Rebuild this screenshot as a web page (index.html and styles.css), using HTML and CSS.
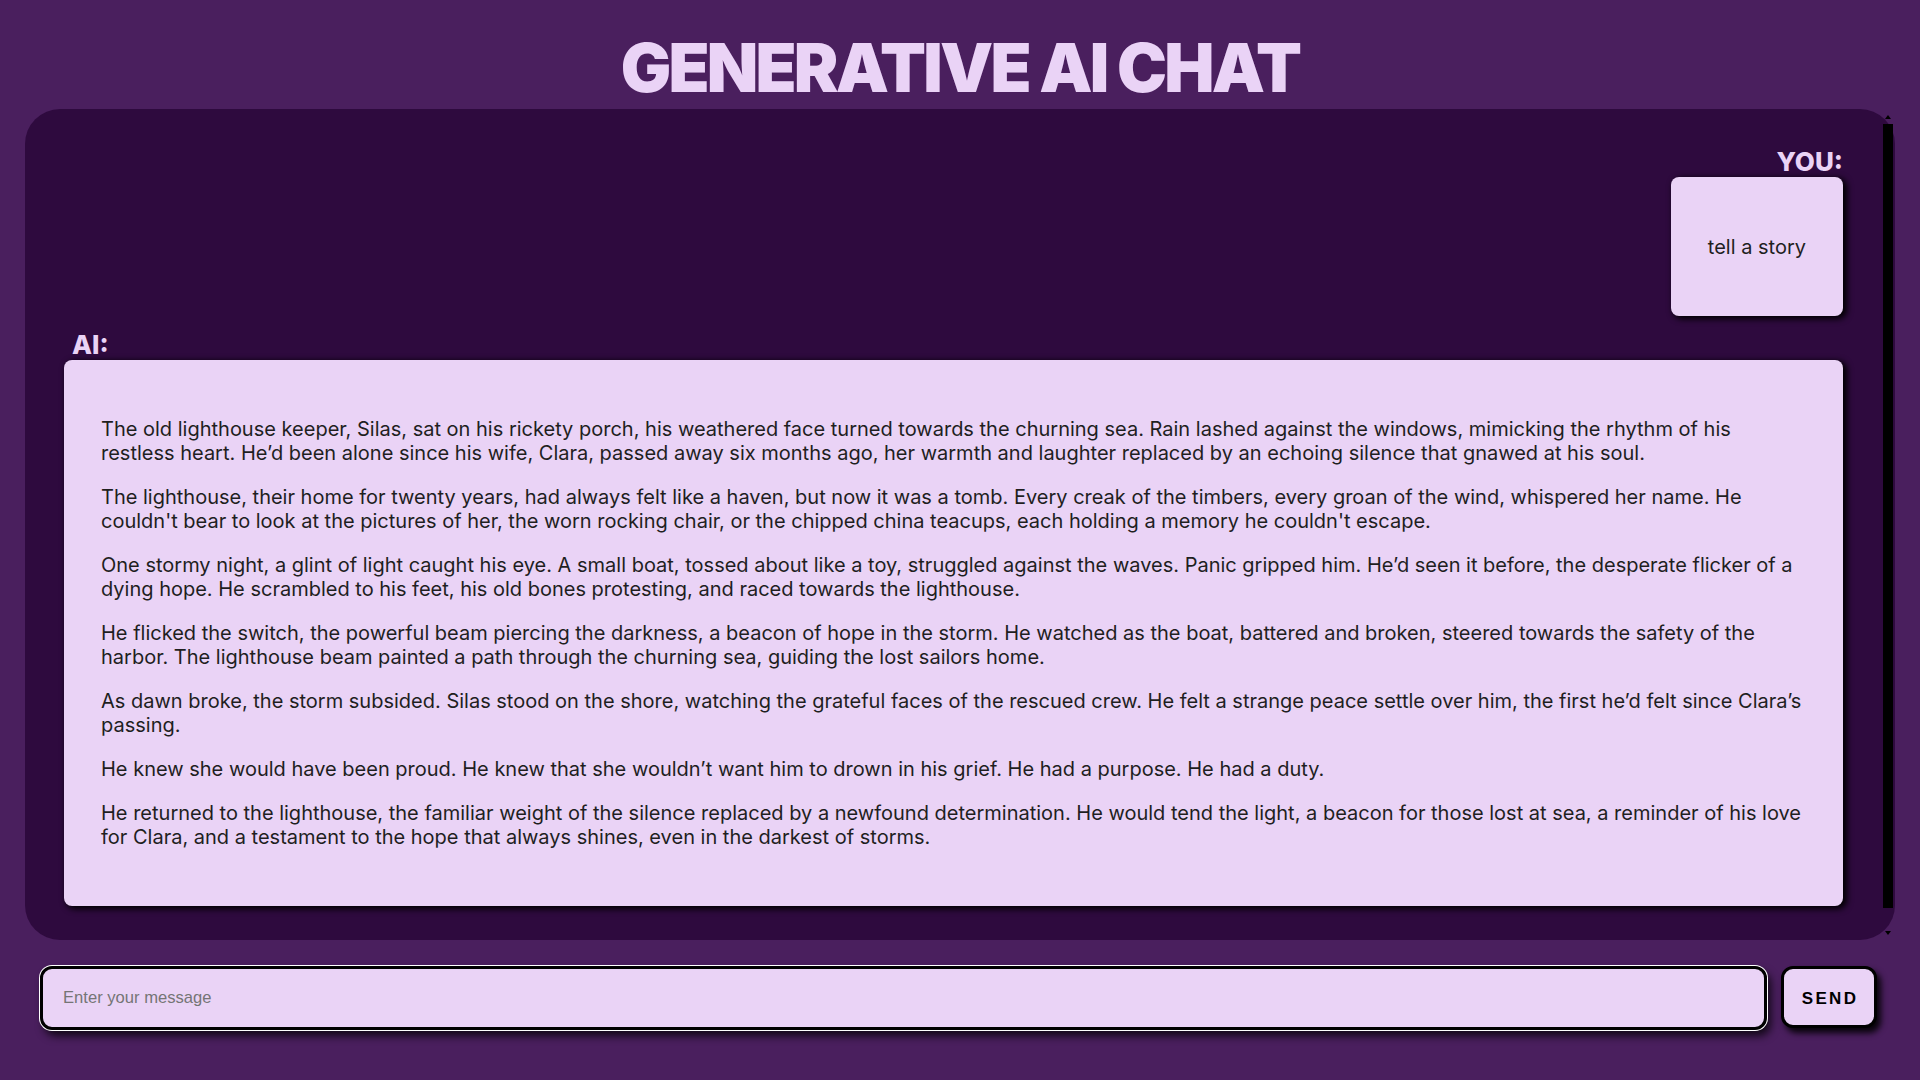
FILE: index.html
```html
<!DOCTYPE html>
<html lang="en">
<head>
<meta charset="utf-8">
<title>Generative AI Chat</title>
<link rel="stylesheet" href="styles.css">
</head>
<body>
<h1 class="title">GENERATIVE AI CHAT</h1>
<main class="chat">
  <div class="chat-body">
    <div class="msg msg-user">
      <div class="label">YOU:</div>
      <div class="bubble"><p>tell a story</p></div>
    </div>
    <div class="msg msg-ai">
      <div class="label">AI:</div>
      <div class="bubble">
        <p>The old lighthouse keeper, Silas, sat on his rickety porch, his weathered face turned towards the churning sea. Rain lashed against the windows, mimicking the rhythm of his restless heart. He’d been alone since his wife, Clara, passed away six months ago, her warmth and laughter replaced by an echoing silence that gnawed at his soul.</p>
        <p>The lighthouse, their home for twenty years, had always felt like a haven, but now it was a tomb. Every creak of the timbers, every groan of the wind, whispered her name. He couldn't bear to look at the pictures of her, the worn rocking chair, or the chipped china teacups, each holding a memory he couldn't escape.</p>
        <p>One stormy night, a glint of light caught his eye. A small boat, tossed about like a toy, struggled against the waves. Panic gripped him. He’d seen it before, the desperate flicker of a dying hope. He scrambled to his feet, his old bones protesting, and raced towards the lighthouse.</p>
        <p>He flicked the switch, the powerful beam piercing the darkness, a beacon of hope in the storm. He watched as the boat, battered and broken, steered towards the safety of the harbor. The lighthouse beam painted a path through the churning sea, guiding the lost sailors home.</p>
        <p>As dawn broke, the storm subsided. Silas stood on the shore, watching the grateful faces of the rescued crew. He felt a strange peace settle over him, the first he’d felt since Clara’s passing.</p>
        <p>He knew she would have been proud. He knew that she wouldn’t want him to drown in his grief. He had a purpose. He had a duty.</p>
        <p>He returned to the lighthouse, the familiar weight of the silence replaced by a newfound determination. He would tend the light, a beacon for those lost at sea, a reminder of his love for Clara, and a testament to the hope that always shines, even in the darkest of storms.</p>
      </div>
    </div>
  </div>
  <div class="scrollbar" aria-hidden="true">
    <div class="sb-btn"><span class="tri tri-up"></span></div>
    <div class="sb-track"><div class="sb-thumb"></div></div>
    <div class="sb-btn"><span class="tri tri-down"></span></div>
  </div>
</main>
<form class="composer">
  <input class="composer-input" type="text" placeholder="Enter your message">
  <button class="send" type="button">SEND</button>
</form>
</body>
</html>
```

FILE: styles.css
```css
* { box-sizing: border-box; }

html, body { height: 100%; }

body {
  margin: 0;
  padding: 27px 25px 0;
  background: #4a1f5e;
  font-family: Inter, "Noto Sans", sans-serif;
  color: #222;
  overflow: hidden;
}

.title {
  margin: 0;
  text-align: center;
  font-size: 67px;
  line-height: 82px;
  font-weight: 900;
  color: #ead3f6;
  letter-spacing: -2.8px;
}

.chat {
  height: 831px;
  background: #2e0a3e;
  border-radius: 35px;
  display: flex;
}

.chat-body {
  flex: 1;
  min-width: 0;
  overflow: hidden;
  padding: 37px 37px 0 39px;
  display: flex;
  flex-direction: column;
}

.scrollbar {
  width: 15px;
  flex: none;
  display: flex;
  flex-direction: column;
}

.sb-btn {
  height: 15px;
  flex: none;
  display: flex;
  align-items: center;
  justify-content: center;
  padding-left: 1px;
}

.tri {
  width: 0;
  height: 0;
  border-left: 3.5px solid transparent;
  border-right: 3.5px solid transparent;
}

.tri-up { border-bottom: 4px solid #000; }
.tri-down { border-top: 4px solid #000; }

.sb-track {
  flex: 1;
  padding-bottom: 17px;
  display: flex;
}

.sb-thumb {
  flex: 1;
  margin: 0 2px 0 3px;
  background: #000;
}

.msg {
  display: flex;
  flex-direction: column;
  flex: none;
}

.msg-user {
  align-items: flex-end;
}

.msg-ai {
  margin-top: 13px;
  align-items: stretch;
}

.label {
  font-size: 26px;
  font-weight: 800;
  color: #ead3f6;
  line-height: 31px;
}

.msg-ai .label {
  padding-left: 8px;
}

.bubble {
  background: #ead3f6;
  border-radius: 8px;
  font-size: 20px;
  line-height: 24px;
  color: #1f1f1f;
  box-shadow: 3px 2px 6px 1px #000;
  flex: none;
}

.bubble p {
  margin: 20px 0;
}

.msg-user .bubble {
  padding: 0 37px;
  height: 139px;
  display: flex;
  align-items: center;
}

.msg-ai .bubble {
  padding: 37px;
}

.composer {
  display: flex;
  gap: 14px;
  margin: 26px 0 0;
  padding: 0 18px 0 15px;
}

.composer-input {
  flex: 1;
  height: 64px;
  border: 3px solid #000;
  border-radius: 12px;
  background: #ead3f6;
  padding: 0 20px;
  font-family: "Liberation Sans", Arial, sans-serif;
  font-size: 16.6px;
  color: #222;
  box-shadow: 0 0 0 1px #fff, 4px 6px 8px rgba(0, 0, 0, 0.75);
  outline: none;
}

.composer-input::placeholder {
  color: #757575;
}

.send {
  width: 96px;
  height: 62px;
  border: 3px solid #000;
  border-radius: 12px;
  background: #ead3f6;
  font-family: "Liberation Sans", Arial, sans-serif;
  font-weight: 700;
  font-size: 17px;
  letter-spacing: 2.3px;
  padding: 4px 0 0 2px;
  color: #000;
  box-shadow: 4px 5px 6px rgba(0, 0, 0, 0.9);
  cursor: pointer;
}
```
